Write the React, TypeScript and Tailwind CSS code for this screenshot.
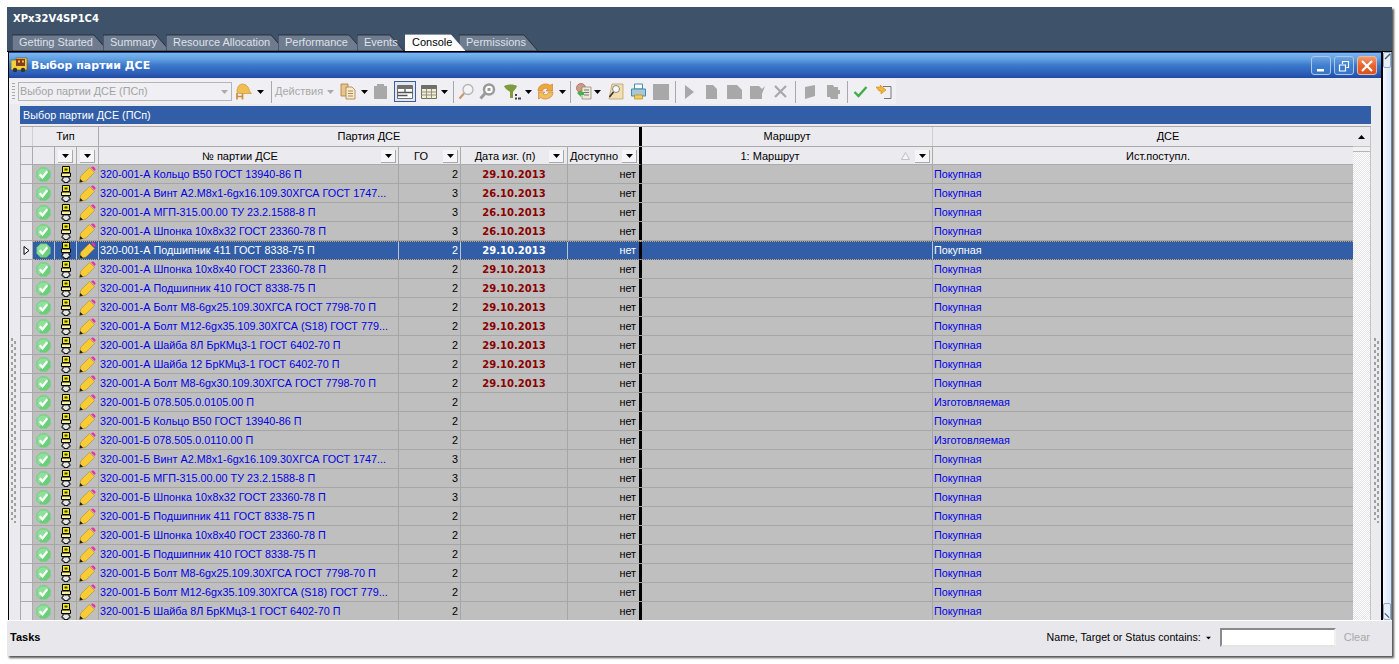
const tabs = [
  { label: "Getting Started", w: "w-[97px]", width: 97, ml: "ml-[5px]" },
  { label: "Summary", w: "w-[68px]", width: 68, ml: "-ml-[6px]" },
  { label: "Resource Allocation", w: "w-[120px]", width: 120, ml: "-ml-[5px]" },
  { label: "Performance", w: "w-[86px]", width: 86, ml: "-ml-[8px]" },
  { label: "Events", w: "w-[48px]", width: 48, ml: "-ml-[7px]" },
  { label: "Console", w: "w-[61px]", width: 61, ml: "ml-[0px]", active: true },
  { label: "Permissions", w: "w-[80px]", width: 80, ml: "-ml-[7px]" },
];

const A = "320-001-А ";
const B = "320-001-Б ";
const rows = [
  [A + "Кольцо В50 ГОСТ 13940-86 П", 2, "29.10.2013", "Покупная"],
  [A + "Винт А2.М8х1-6gх16.109.30ХГСА ГОСТ 1747...", 3, "26.10.2013", "Покупная"],
  [A + "МГП-315.00.00 ТУ 23.2.1588-8 П", 3, "26.10.2013", "Покупная"],
  [A + "Шпонка 10х8х32 ГОСТ 23360-78 П", 3, "26.10.2013", "Покупная"],
  [A + "Подшипник 411 ГОСТ 8338-75 П", 2, "29.10.2013", "Покупная"],
  [A + "Шпонка 10х8х40 ГОСТ 23360-78 П", 2, "29.10.2013", "Покупная"],
  [A + "Подшипник 410 ГОСТ 8338-75 П", 2, "29.10.2013", "Покупная"],
  [A + "Болт М8-6gх25.109.30ХГСА ГОСТ 7798-70 П", 2, "29.10.2013", "Покупная"],
  [A + "Болт М12-6gх35.109.30ХГСА (S18) ГОСТ 779...", 2, "29.10.2013", "Покупная"],
  [A + "Шайба 8Л БрКМц3-1 ГОСТ 6402-70 П", 2, "29.10.2013", "Покупная"],
  [A + "Шайба 12 БрКМц3-1 ГОСТ 6402-70 П", 2, "29.10.2013", "Покупная"],
  [A + "Болт М8-6gх30.109.30ХГСА ГОСТ 7798-70 П", 2, "29.10.2013", "Покупная"],
  [B + "078.505.0.0105.00 П", 2, "", "Изготовляемая"],
  [B + "Кольцо В50 ГОСТ 13940-86 П", 2, "", "Покупная"],
  [B + "078.505.0.0110.00 П", 2, "", "Изготовляемая"],
  [B + "Винт А2.М8х1-6gх16.109.30ХГСА ГОСТ 1747...", 3, "", "Покупная"],
  [B + "МГП-315.00.00 ТУ 23.2.1588-8 П", 3, "", "Покупная"],
  [B + "Шпонка 10х8х32 ГОСТ 23360-78 П", 3, "", "Покупная"],
  [B + "Подшипник 411 ГОСТ 8338-75 П", 2, "", "Покупная"],
  [B + "Шпонка 10х8х40 ГОСТ 23360-78 П", 2, "", "Покупная"],
  [B + "Подшипник 410 ГОСТ 8338-75 П", 2, "", "Покупная"],
  [B + "Болт М8-6gх25.109.30ХГСА ГОСТ 7798-70 П", 2, "", "Покупная"],
  [B + "Болт М12-6gх35.109.30ХГСА (S18) ГОСТ 779...", 2, "", "Покупная"],
  [B + "Шайба 8Л БрКМц3-1 ГОСТ 6402-70 П", 2, "", "Покупная"],
] as [string, number, string, string][];

function Caret({ className = "" }: { className?: string }) {
  return (
    <svg width="7" height="4" viewBox="0 0 7 4" className={`shrink-0 ${className}`}>
      <path d="M0 0h7L3.500 4z" fill="currentColor" />
    </svg>
  );
}

function FilterButton() {
  return (
    <div className="flex h-[13px] w-[15px] shrink-0 items-center justify-center border-r border-b border-[#a8a8a8] bg-[#f6f6f8] text-black">
      <Caret />
    </div>
  );
}

function Tab({ label, w, width, ml, active }: { label: string; w: string; width: number; ml: string; active?: boolean }) {
  return (
    <div className={`relative h-[17px] ${w} ${ml} ${active ? "z-10" : ""}`}>
      <svg width={width} height="17" className="absolute inset-0">
        <path
          d={`M0 17V1h${width - 15}l14 16z`}
          fill={active ? "#ffffff" : "#6f7b8f"}
          stroke={active ? "#ffffff" : "#1e2530"}
          strokeWidth="0.8"
        />
      </svg>
      <span className={`absolute top-0 left-[7px] text-[11px] leading-[17px] whitespace-nowrap ${active ? "text-black" : "text-[#dde2e8]"}`}>
        {label}
      </span>
    </div>
  );
}

function CheckIcon() {
  return (
    <svg width="15" height="15" viewBox="0 0 15 15">
      <path d="M4.500 .5h6L14.500 4.500v6l-4 4h-6L.5 10.500v-6z" fill="#69cf78" />
      <path d="M4.500 1.500h6l2 2-9 9-2-2v-6z" fill="#8ee09a" />
      <path d="M3.800 7.300l2.700 3.200L11.300 4.300" fill="none" stroke="#ffffff" strokeWidth="2.300" />
    </svg>
  );
}

function BoltIcon() {
  return (
    <svg width="12" height="17" viewBox="0 0 12 17">
      <path d="M2.500 .5h7v6h-7z" fill="#f5ee10" stroke="#000" />
      <path d="M4.500 2.500h3v2h-3z" fill="#3a3a10" />
      <path d="M1.500 7h9v3.500h-9z" fill="#f7f39a" stroke="#000" />
      <path d="M3 11h6v2h1v2H8v1.500H4V15H2v-2h1z" fill="#e6e6e6" stroke="#000" strokeWidth="0.9" />
    </svg>
  );
}

function PencilIcon() {
  return (
    <svg width="17" height="17" viewBox="0 0 17 17">
      <path d="M.5 16.500l1.300-6.500L10.500 1.500 15.500 6.500 7 15z" fill="#f9cb35" stroke="#a08020" strokeWidth="0.5" />
      <path d="M12 1.500l1.300-1c1.200-.4 3.600 2 3.200 3.200l-1 1.300z" fill="#ef2fa6" />
      <path d="M.5 16.500l.8-3.600 2.800 2.800z" fill="#222" />
    </svg>
  );
}

function Bell() {
  return (
    <svg width="17" height="17" viewBox="0 0 17 17">
      <path d="M2 9c0-5 2-8 5.500-8S14 4 14.500 8l2 2.500H5c-1.500 0-2.500-.5-3-1.500z" fill="#f2bd55" stroke="#c28d2e" strokeWidth="0.6" />
      <path d="M2 10v6.500M7.500 10.500v6M2 13.500h5.500" stroke="#c98f3b" strokeWidth="1.700" fill="none" />
    </svg>
  );
}

function Pages() {
  return (
    <svg width="16" height="17" viewBox="0 0 16 17">
      <path d="M1 1h7v12H1z" fill="#e8c58e" stroke="#a77b3e" strokeWidth="0.8" />
      <path d="M6 4h6l3 3v9H6z" fill="#f7e9cc" stroke="#a77b3e" strokeWidth="0.8" />
      <path d="M8 8h5M8 10.500h5M8 13h5" stroke="#b08a50" />
    </svg>
  );
}

function GreyClip() {
  return (
    <svg width="16" height="17" viewBox="0 0 16 17">
      <path d="M1 3h3V1h7v2h3v13H1z" fill="#a8a8a8" />
    </svg>
  );
}

function GridIcon({ tint }: { tint?: boolean }) {
  return (
    <svg width="16" height="14" viewBox="0 0 16 14">
      <path d="M.5.500h15v13H.5z" fill={tint ? "#f4efc4" : "#fff"} stroke="#6f6f6f" />
      <path d="M.5 4h15V.500H.5z" fill="#6f6f6f" />
      {tint ? (
        <path d="M.5 7h15M.5 10h15M5.500 4v9.500M10.500 4v9.500" stroke="#8f8f8f" />
      ) : (
        <path d="M.5 7.500h15M.5 10.500h10M8 4v3" stroke="#555" strokeWidth="1.300" />
      )}
    </svg>
  );
}

function Lens({ dark }: { dark?: boolean }) {
  return (
    <svg width="17" height="17" viewBox="0 0 17 17">
      {dark ? (
        <>
          <circle cx="10" cy="6.500" r="5" fill="#fff" stroke="#9a9a9a" strokeWidth="2.500" />
          <path d="M6 10.500L1.500 15.500" stroke="#9a9a9a" strokeWidth="3" />
          <path d="M8.500 5h3v3h-3z" fill="#9a9a9a" />
        </>
      ) : (
        <>
          <circle cx="10" cy="6.500" r="5" fill="#f3f3f6" stroke="#b4b4b4" strokeWidth="1.300" />
          <path d="M6 10.500L1.500 15.500" stroke="#c79a66" strokeWidth="2.200" />
        </>
      )}
    </svg>
  );
}

function Funnel() {
  return (
    <svg width="17" height="16" viewBox="0 0 17 16">
      <path d="M0 2c3-2 10-2 13 0-1 3-3 4-4 6v6H6V8C4 6 1 5 0 2z" fill="#7f9b3e" />
      <path d="M11 10h2v2h-2zM11 13.500h2v2h-2zM14 13.500h3v2h-3z" fill="#444" />
    </svg>
  );
}

function RefreshIcon() {
  return (
    <svg width="17" height="17" viewBox="0 0 17 17">
      <path d="M1 8c0-4.500 3.500-7 8-7 2 0 3 .5 4 1.500l2.500-1.500v7H9l2-2c-2-1.500-5-.5-5.500 2z" fill="#efa63d" stroke="#c57c1f" strokeWidth="0.6" />
      <path d="M16 9c0 4.500-3.500 7-8 7-2 0-3-.5-4-1.500L1.500 16V9H8l-2 2c2 1.500 5 .5 5.500-2z" fill="#f1bd62" stroke="#c57c1f" strokeWidth="0.6" />
    </svg>
  );
}

function Report() {
  return (
    <svg width="17" height="17" viewBox="0 0 17 17">
      <circle cx="6" cy="5" r="4.500" fill="#d09a8a" stroke="#9c5e4f" strokeWidth="0.7" />
      <path d="M7 4h9v12H7z" fill="#efe8d6" stroke="#857f6e" strokeWidth="0.7" />
      <path d="M9 7h5M9 9.500h5M9 12h5" stroke="#777" />
      <path d="M2 10l4-3v2h3v3H6v2z" fill="#48b24c" />
    </svg>
  );
}

function Preview() {
  return (
    <svg width="16" height="17" viewBox="0 0 16 17">
      <path d="M4 1h11v15H1z" fill="#f2dfae" stroke="#b49a5c" strokeWidth="0.7" />
      <circle cx="8" cy="6" r="3.500" fill="#f8f8f8" stroke="#888" />
      <path d="M5.500 9L1.500 14" stroke="#333" strokeWidth="1.600" />
    </svg>
  );
}

function Printer() {
  return (
    <svg width="15" height="17" viewBox="0 0 15 17">
      <path d="M3.500 1h8v5h-8z" fill="#fff" stroke="#3d8db0" />
      <path d="M.5 6h14v7H.5z" fill="#a9c7d4" stroke="#3d8db0" />
      <path d="M3.500 12h8v4h-8z" fill="#f6cb54" stroke="#b08d27" strokeWidth="0.7" />
    </svg>
  );
}

function GreyShape({ d, w = 16 }: { d: string; w?: number }) {
  return (
    <svg width={w} height="16" viewBox={`0 0 ${w} 16`}>
      <path d={d} fill="#a8a8a8" />
    </svg>
  );
}

function Separator({ className }: { className: string }) {
  return <div className={`h-[22px] w-px shrink-0 bg-[#a9a9ad] ${className}`} />;
}

function Toolbar() {
  return (
    <div className="flex h-[27px] shrink-0 items-center bg-[#ebeaee]">
      <div className="flex h-[25px] w-[887px] items-center bg-[#f0eff3] pl-[3px]">
        <div className="h-[18px] w-[3px] shrink-0 bg-[linear-gradient(#a8a8a8_50%,transparent_50%)] bg-[length:3px_3px]" />
        <div className="ml-[3px] flex h-[19px] w-[214px] shrink-0 items-center justify-between border border-[#b5b5b5] pr-[3px] pl-[1px] text-[10.8px] text-[#a3a3a3]">
          <span>Выбор партии ДСЕ (ПСп)</span>
          <Caret className="text-[#aaaaaa]" />
        </div>
        <div className="ml-[3px] shrink-0"><Bell /></div>
        <Caret className="ml-[5px] text-black" />
        <Separator className="ml-[7px]" />
        <span className="ml-[3px] w-[48px] shrink-0 text-[11px] text-[#a9a9a9]">Действия</span>
        <Caret className="ml-[4px] text-[#aaaaaa]" />
        <div className="ml-[6px] shrink-0"><Pages /></div>
        <Caret className="ml-[5px] text-black" />
        <div className="ml-[5px] shrink-0"><GreyClip /></div>
        <div className="ml-[5px] flex h-[21px] w-[22px] shrink-0 items-center justify-center border border-[#3b5f9c] bg-[#e4e6f0]"><GridIcon /></div>
        <div className="ml-[5px] shrink-0"><GridIcon tint /></div>
        <Caret className="ml-[4px] text-black" />
        <Separator className="ml-[5px]" />
        <div className="ml-[4px] shrink-0"><Lens /></div>
        <div className="ml-[4px] shrink-0"><Lens dark /></div>
        <div className="ml-[8px] shrink-0"><Funnel /></div>
        <Caret className="ml-[4px] text-black" />
        <div className="ml-[5px] shrink-0"><RefreshIcon /></div>
        <Caret className="ml-[5px] text-black" />
        <Separator className="ml-[4px]" />
        <div className="ml-[4px] shrink-0"><Report /></div>
        <Caret className="ml-[2px] text-black" />
        <div className="ml-[7px] shrink-0"><Preview /></div>
        <div className="ml-[7px] shrink-0"><Printer /></div>
        <div className="ml-[7px] h-[16px] w-[16px] shrink-0 bg-[#a8a8a8]" />
        <Separator className="ml-[6px]" />
        <div className="ml-[8px] shrink-0"><GreyShape d="M1 1l9 7-9 7z" w={11} /></div>
        <div className="ml-[8px] shrink-0"><GreyShape d="M3 1h7l4 4v10H3z" /></div>
        <div className="ml-[7px] shrink-0"><GreyShape d="M1 1h10l5 5v9H1z" /></div>
        <div className="ml-[7px] shrink-0"><GreyShape d="M1 2h9l3 3 3-3-3 8v5H1z" /></div>
        <div className="ml-[8px] shrink-0">
          <svg width="15" height="15" viewBox="0 0 15 15">
            <path d="M2 2l11 11M13 2L2 13" stroke="#a8a8a8" strokeWidth="2.200" />
          </svg>
        </div>
        <Separator className="ml-[7px]" />
        <div className="ml-[7px] shrink-0"><GreyShape d="M2 3l10-2v11l-10 3z" w={14} /></div>
        <div className="ml-[8px] shrink-0"><GreyShape d="M2 1h6l1 2h4v3h2v4h-2v5H6l-1-2H2z" /></div>
        <Separator className="ml-[6px]" />
        <div className="ml-[5px] shrink-0">
          <svg width="15" height="13" viewBox="0 0 15 13">
            <path d="M1.500 7l4 4L13.500 2" fill="none" stroke="#3fae4a" strokeWidth="2.400" />
          </svg>
        </div>
        <div className="ml-[8px] shrink-0">
          <svg width="16" height="16" viewBox="0 0 16 16">
            <path d="M7 2.500h8v12H8" fill="none" stroke="#777" />
            <path d="M0 3h5l-1-2 6 5-5 4v-3H3z" fill="#f3b63b" stroke="#c78718" strokeWidth="0.6" />
          </svg>
        </div>
      </div>
    </div>
  );
}

function WindowButton({ kind }: { kind: "min" | "max" | "close" }) {
  const tone =
    kind === "close"
      ? "bg-[linear-gradient(#ef9a70,#e8642f_50%,#d9531f)] border-[#e9b9a0]"
      : "bg-[linear-gradient(#6fa5e0,#3f7fd0_50%,#3a74c4)] border-[#a8c8ec]";
  return (
    <div className={`flex h-[19px] w-[20px] shrink-0 items-center justify-center rounded-[3px] border ${tone}`}>
      <svg width="14" height="14" viewBox="0 0 14 14">
        {kind === "min" && <path d="M3 10h7v2.500H3z" fill="#fff" />}
        {kind === "max" && <path d="M2.500 6h6v6h-6zM5.500 5V2.500h6v6H9.500" fill="none" stroke="#fff" strokeWidth="1.200" />}
        {kind === "close" && <path d="M2 2l10 10M12 2L2 12" stroke="#fff" strokeWidth="2.200" />}
      </svg>
    </div>
  );
}

function TableHeader() {
  const cell = "flex h-[18px] shrink-0 items-center border-r border-b border-[#ababab] pt-[1px]";
  return (
    <div className="shrink-0 text-[11px] text-black">
      <div className="flex h-[20px] border-b border-[#ababab]">
        <div className="w-[12px] shrink-0 border-r border-[#cfcfcf]" />
        <div className="flex w-[66px] shrink-0 items-center justify-center border-r border-[#ababab]">Тип</div>
        <div className="flex w-[543px] shrink-0 items-center justify-center border-r-[3px] border-black">Партия ДСЕ</div>
        <div className="flex w-[291px] shrink-0 items-center justify-center border-r border-[#cfcfcf]">Маршрут</div>
        <div className="flex flex-1 items-center justify-center pl-[50px]">ДСЕ</div>
      </div>
      <div className="flex">
        <div className={`${cell} w-[12px]`} />
        <div className={`${cell} w-[22px]`} />
        <div className={`${cell} w-[22px] justify-center`}><FilterButton /></div>
        <div className={`${cell} w-[22px] justify-center`}><FilterButton /></div>
        <div className={`${cell} w-[300px] pr-[2px]`}>
          <span className="flex-1 text-center">№ партии ДСЕ</span>
          <FilterButton />
        </div>
        <div className={`${cell} w-[62px] pr-[2px]`}>
          <span className="flex-1 text-center">ГО</span>
          <FilterButton />
        </div>
        <div className={`${cell} w-[107px] pr-[3px]`}>
          <span className="flex-1 text-center">Дата изг. (п)</span>
          <FilterButton />
        </div>
        <div className="flex h-[18px] w-[74px] shrink-0 items-center border-r-[3px] border-b border-r-black border-b-[#ababab] pt-[1px] pr-[2px] pl-[2px]">
          <span className="flex-1 whitespace-nowrap">Доступно</span>
          <FilterButton />
        </div>
        <div className={`${cell} w-[291px] pr-[2px]`}>
          <span className="flex-1 pr-[3px] text-center">1: Маршрут</span>
          <svg width="9" height="8" viewBox="0 0 9 8" className="mr-[5px] shrink-0">
            <path d="M4.500 .5L8.500 7.500H.5z" fill="#f4f4f4" stroke="#b5b5b5" strokeWidth="0.8" />
          </svg>
          <FilterButton />
        </div>
        <div className="flex h-[18px] flex-1 items-center justify-center border-b border-[#ababab] pt-[1px] pl-[30px]">Ист.поступл.</div>
      </div>
    </div>
  );
}

function Row({ row, selected }: { row: [string, number, string, string]; selected: boolean }) {
  const [name, go, date, source] = row;
  const tone = selected
    ? "bg-[#325ea8] border-y border-dotted border-[#c8a36a]"
    : "bg-[#bfbfbf] border-b border-[#a6a6a6]";
  const cell = `flex h-full shrink-0 items-center border-r ${selected ? "border-[#b9c4d6]" : "border-[#a6a6a6]"}`;
  return (
    <div className="flex h-[19px] shrink-0 text-[10.8px]">
      <div className="flex h-full w-[12px] shrink-0 items-center justify-center border-r border-b border-[#ababab] bg-[#ebeaee]">
        {selected && (
          <svg width="7" height="9" viewBox="0 0 7 9">
            <path d="M1 .5L6 4.500 1 8.500z" fill="#fff" stroke="#000" />
          </svg>
        )}
      </div>
      <div className={`flex min-w-0 flex-1 ${tone}`}>
        <div className={`${cell} w-[22px] justify-center`}><CheckIcon /></div>
        <div className={`${cell} w-[22px] justify-center`}><BoltIcon /></div>
        <div className={`${cell} w-[22px] justify-center`}><PencilIcon /></div>
        <div className={`${cell} w-[300px] pl-[1px] whitespace-nowrap ${selected ? "text-white" : "text-[#0000e6]"}`}>{name}</div>
        <div className={`${cell} w-[62px] justify-end pr-[2px] ${selected ? "text-white" : "text-black"}`}>{go}</div>
        <div className={`${cell} w-[107px] justify-center font-['DejaVu_Sans',sans-serif] text-[10px] font-bold ${selected ? "text-white" : "text-[#8b0000]"}`}>
          {date}
        </div>
        <div className={`flex h-full w-[74px] shrink-0 items-center justify-end border-r-[3px] border-black pr-[3px] ${selected ? "text-white" : "text-black"}`}>нет</div>
        <div className={`${cell} w-[291px]`} />
        <div className={`flex h-full flex-1 items-center pl-[1px] ${selected ? "text-white" : "text-[#0000e6]"}`}>{source}</div>
      </div>
    </div>
  );
}

export default function App() {
  return (
    <div className="h-[664px] w-[1399px] overflow-hidden bg-white pt-[7px] pl-[7px] font-['Liberation_Sans',Arial,sans-serif]">
      <div className="flex h-[649px] w-[1385px] flex-col shadow-[2px_2px_2px_#555555]">
        {/* App header with tabs */}
        <div className="h-[45px] shrink-0 bg-[#3e5269] pt-[6px]">
          <div className="pl-[6px] font-['DejaVu_Sans',sans-serif] text-[10px] leading-[12px] font-bold text-white">XPx32V4SP1C4</div>
          <div className="mt-[9px] flex border-b border-black">
            {tabs.map((t) => (
              <Tab key={t.label} {...t} />
            ))}
          </div>
        </div>

        <div className="flex min-h-0 flex-1 border-l border-white">
          <div className="relative flex min-w-0 flex-1 flex-col border-x-2 border-black border-l-[1px] bg-[#ebeaee]">
            {/* Inner window title */}
            <div className="flex h-[26px] shrink-0 items-center border-t border-[#24408a] bg-[linear-gradient(#7bb8ee,#5f9fe2_25%,#3b77cb_50%,#2d60b8_80%,#2249a4)] pr-[2px] pl-[2px]">
              <svg width="17" height="17" viewBox="0 0 17 17" className="shrink-0">
                <path d="M0 3h5V1h11v12H0z" fill="#f2d23a" stroke="#6b4a18" strokeWidth="0.6" />
                <path d="M5 2h9v7H5z" fill="#8a3a22" />
                <path d="M7 3.500h2v2H7zM11 3.500h2v2h-2z" fill="#f3c84a" />
                <circle cx="4" cy="13" r="2.200" fill="#333" />
                <circle cx="12" cy="13" r="2.200" fill="#333" />
              </svg>
              <span className="ml-[3px] pt-[1px] font-['DejaVu_Sans',sans-serif] text-[11px] font-bold text-white">Выбор партии ДСЕ</span>
              <div className="ml-auto flex gap-[3px] pr-[2px]">
                <WindowButton kind="min" />
                <WindowButton kind="max" />
                <WindowButton kind="close" />
              </div>
            </div>

            <Toolbar />

            <div className="flex min-h-0 flex-1 flex-col pt-[1px] pr-[10px] pl-[11px]">
              <div className="h-[18px] shrink-0 bg-[#325ea8] pl-[3px] text-[10.8px] leading-[18px] text-white">Выбор партии ДСЕ (ПСп)</div>
              <div className="mt-[2px] flex min-h-0 flex-1 border-t border-l border-[#a9a9a9]">
                <div className="flex min-w-0 flex-1 flex-col overflow-hidden">
                  <TableHeader />
                  {rows.map((r, i) => (
                    <Row key={i} row={r} selected={i === 4} />
                  ))}
                </div>
                {/* Vertical scrollbar */}
                <div className="flex w-[18px] shrink-0 flex-col border-r border-[#c4c4c4]">
                  <div className="flex h-[20px] shrink-0 items-center justify-center border-b border-[#c4c4c4] bg-[#ebeaee] text-black">
                    <Caret className="rotate-180" />
                  </div>
                  <div className="h-[5px] shrink-0 border-b border-[#b5b5b5] bg-[#f1f1f4]" />
                  <div className="flex-1 bg-[repeating-conic-gradient(#ffffff_0_25%,#e4e4e6_0_50%)] bg-[length:2px_2px]" />
                </div>
              </div>
            </div>

            {/* Splitter grips */}
            <div className="absolute top-[286px] left-[2px] h-[182px] w-[2px] bg-[linear-gradient(#9f9f9f_50%,transparent_50%)] bg-[length:2px_6px]" />
            <div className="absolute top-[289px] left-[5px] h-[182px] w-[2px] bg-[linear-gradient(#9f9f9f_50%,transparent_50%)] bg-[length:2px_6px]" />
            <div className="absolute top-[286px] right-[5px] h-[182px] w-[2px] bg-[linear-gradient(#9f9f9f_50%,transparent_50%)] bg-[length:2px_6px]" />
            <div className="absolute top-[289px] right-[2px] h-[182px] w-[2px] bg-[linear-gradient(#9f9f9f_50%,transparent_50%)] bg-[length:2px_6px]" />
          </div>

          {/* Outer scroll strip */}
          <div className="flex w-[9px] shrink-0 flex-col justify-between border-r border-[#6f8090] bg-[linear-gradient(90deg,#f4f8fe,#d6e6fa)]">
            <div className="h-[16px] rounded-[2px] border border-[#8fa9c9] bg-[#e8eff8]">
              <svg width="7" height="7" viewBox="0 0 7 7"><path d="M1 6l5-5" stroke="#4d5b6b" strokeWidth="1.500" /></svg>
            </div>
            <div className="flex h-[17px] items-end rounded-[2px] border border-[#8fa9c9] bg-[#e8eff8]">
              <svg width="7" height="7" viewBox="0 0 7 7"><path d="M1 1l5 5" stroke="#4d5b6b" strokeWidth="1.500" /></svg>
            </div>
          </div>
        </div>

        {/* Tasks bar */}
        <div className="flex h-[36px] shrink-0 items-center border-t border-white bg-[#e8e7ec] pb-[2px] text-[11px]">
          <span className="pl-[3px] font-bold text-black">Tasks</span>
          <span className="ml-auto text-[10.6px] text-black">Name, Target or Status contains:</span>
          <Caret className="ml-[4px] scale-75 text-black" />
          <div className="ml-[8px] h-[19px] w-[116px] shrink-0 border-2 border-t-[#8a8a8a] border-r-[#f0f0f0] border-b-[#e4e4e4] border-l-[#8a8a8a] bg-white" />
          <span className="mr-[22px] ml-[8px] text-[#a9a9a9]">Clear</span>
        </div>
      </div>
    </div>
  );
}
